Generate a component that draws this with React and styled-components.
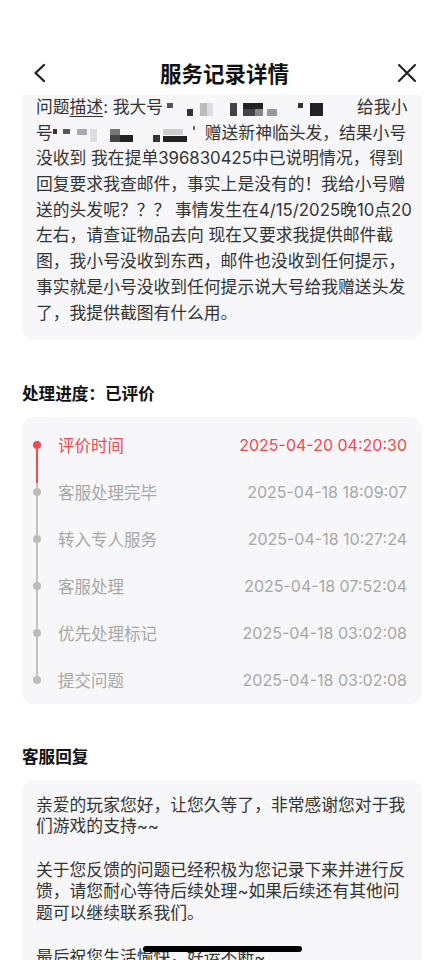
import React from 'react';
import styled, { createGlobalStyle } from 'styled-components';

const GlobalStyle = createGlobalStyle`
  body {
    margin: 0;
    background: #ffffff;
    font-family: "Inter", "Noto Sans CJK SC", sans-serif;
    color: #333333;
  }
`;

const RED = '#f0494f';
const GRAY_LINE = '#c3c2bb';

const Page = styled.div`
  padding: 83px 22px 40px;
`;

const Header = styled.header`
  position: fixed;
  top: 0;
  left: 0;
  right: 0;
  z-index: 10;
  height: 95px;
  box-sizing: border-box;
  padding-top: 51px;
  background: #ffffff;
`;

const NavRow = styled.div`
  height: 44px;
  display: grid;
  grid-template-columns: 1fr auto 1fr;
  align-items: center;
  padding: 0 27px 0 32px;
`;

const Title = styled.h1`
  margin: 0;
  font-family: "Noto Sans CJK SC", sans-serif;
  font-size: 21.5px;
  font-weight: 700;
  color: #111111;
  line-height: 30px;
`;

const NavButton = styled.button`
  border: none;
  background: transparent;
  padding: 0;
  display: flex;
  justify-self: ${({ end }) => (end ? 'end' : 'start')};
  color: #222222;
`;

const Card = styled.section`
  background: #f7f7f9;
  border-radius: 12px;
  padding: ${({ pad }) => pad};
`;

const Line = styled.div`
  white-space: nowrap;
  font-size: 16.8px;
  line-height: ${({ lh }) => lh}px;
  height: ${({ lh }) => lh}px;
  color: #333333;
`;

const Under = styled.span`
  text-decoration: underline;
  text-underline-offset: 3px;
`;

const Mosaic = styled.svg`
  display: inline-block;
  vertical-align: -3px;
`;

const SectionTitle = styled.h2`
  margin: ${({ top }) => top}px 0 12px;
  font-family: "Noto Sans CJK SC", sans-serif;
  font-size: 16.6px;
  font-weight: 700;
  line-height: 24px;
  color: #111111;
`;

const Row = styled.div`
  display: flex;
  align-items: stretch;
  height: 47px;
`;

const Rail = styled.div`
  width: 9px;
  display: flex;
  flex-direction: column;
  align-items: center;
  margin-right: 17px;
`;

const Segment = styled.div`
  width: 2px;
  flex: 1;
  background: ${({ bg }) => bg};
`;

const Dot = styled.div`
  width: 8px;
  height: 8px;
  border-radius: 50%;
  background: ${({ active }) => (active ? RED : '#bebdb5')};
`;

const Label = styled.div`
  align-self: center;
  font-family: "Noto Sans CJK SC", sans-serif;
  font-size: 16.5px;
  color: ${({ active }) => (active ? RED : '#a7a7a7')};
`;

const Time = styled.div`
  align-self: center;
  margin-left: auto;
  font-family: "Inter", sans-serif;
  font-size: 16px;
  color: ${({ active }) => (active ? RED : '#a7a7a7')};
`;

const HomeBar = styled.div`
  position: fixed;
  left: 143px;
  bottom: 8px;
  width: 159px;
  height: 6px;
  border-radius: 3px;
  background: #000000;
  z-index: 20;
`;

const blocks1 = [
  [4, 4, 6, 5, '#555'],
  [24, 10, 6, 7, '#333'],
  [37, 4, 7, 13, '#bbb'],
  [44, 4, 6, 13, '#ddd'],
  [67, 4, 7, 13, '#444'],
  [80, 4, 20, 6, '#222'],
  [80, 10, 12, 7, '#444'],
  [92, 10, 8, 7, '#888'],
  [104, 10, 10, 7, '#999'],
  [135, 4, 5, 5, '#333'],
  [147, 4, 13, 13, '#222'],
];

const blocks2 = [
  [0, 4, 4, 5, '#333'],
  [10, 4, 7, 5, '#555'],
  [24, 4, 10, 6, '#aaa'],
  [37, 4, 7, 13, '#ddd'],
  [57, 4, 10, 6, '#777'],
  [57, 10, 10, 7, '#444'],
  [67, 10, 13, 7, '#222'],
  [100, 10, 7, 7, '#333'],
  [110, 4, 20, 6, '#ccc'],
  [110, 11, 24, 6, '#222'],
  [140, 1, 2, 4, '#666'],
];

const Pixels = ({ width, blocks }) => (
  <Mosaic width={width} height="17" viewBox={`0 0 ${width} 17`}>
    {blocks.map(([x, y, w, h, c], i) => (
      <rect key={i} x={x} y={y} width={w} height={h} fill={c} />
    ))}
  </Mosaic>
);

const issueLines = [
  '没收到 我在提单396830425中已说明情况，得到',
  '回复要求我查邮件，事实上是没有的！我给小号赠',
  '送的头发呢？？？ 事情发生在4/15/2025晚10点20',
  '左右，请查证物品去向 现在又要求我提供邮件截',
  '图，我小号没收到东西，邮件也没收到任何提示，',
  '事实就是小号没收到任何提示说大号给我赠送头发',
  '了，我提供截图有什么用。',
];

const steps = [
  { label: '评价时间', time: '2025-04-20 04:20:30', active: true },
  { label: '客服处理完毕', time: '2025-04-18 18:09:07' },
  { label: '转入专人服务', time: '2025-04-18 10:27:24' },
  { label: '客服处理', time: '2025-04-18 07:52:04' },
  { label: '优先处理标记', time: '2025-04-18 03:02:08' },
  { label: '提交问题', time: '2025-04-18 03:02:08' },
];

const replyLines = [
  '亲爱的玩家您好，让您久等了，非常感谢您对于我',
  '们游戏的支持~~',
  '',
  '关于您反馈的问题已经积极为您记录下来并进行反',
  '馈，请您耐心等待后续处理~如果后续还有其他问',
  '题可以继续联系我们。',
  '',
  '最后祝您生活愉快，好运不断~',
];

const segTop = (i) => {
  if (i === 0) return 'transparent';
  if (i === 1) return `linear-gradient(${RED} 14px, ${GRAY_LINE} 14px)`;
  return GRAY_LINE;
};

const segBottom = (i) => {
  if (i === steps.length - 1) return 'transparent';
  return i === 0 ? RED : GRAY_LINE;
};

const App = () => (
  <>
    <GlobalStyle />
    <Header>
      <NavRow>
        <NavButton>
          <svg width="14" height="20" viewBox="0 0 14 20" fill="none">
            <path d="M12 2 L3.5 10 L12 18" stroke="#222" strokeWidth="2.4" strokeLinecap="round" strokeLinejoin="round" />
          </svg>
        </NavButton>
        <Title>服务记录详情</Title>
        <NavButton end>
          <svg width="20" height="20" viewBox="0 0 20 20" fill="none">
            <path d="M2 2 L18 18 M18 2 L2 18" stroke="#222" strokeWidth="2.1" strokeLinecap="round" />
          </svg>
        </NavButton>
      </NavRow>
    </Header>

    <Page>
      <Card pad="12px 14px 14px">
        <Line lh={25.7}>
          问题<Under>描述</Under>: 我大号<Pixels width={194} blocks={blocks1} />给我小
        </Line>
        <Line lh={25.7}>
          号<Pixels width={152} blocks={blocks2} />赠送新神临头发，结果小号
        </Line>
        {issueLines.map((t) => (
          <Line key={t} lh={25.7}>{t}</Line>
        ))}
      </Card>

      <SectionTitle top={41}>处理进度：已评价</SectionTitle>
      <Card pad="4.5px 15px 0 10px">
        {steps.map((s, i) => (
          <Row key={s.label}>
            <Rail>
              <Segment bg={segTop(i)} />
              <Dot active={s.active} />
              <Segment bg={segBottom(i)} />
            </Rail>
            <Label active={s.active}>{s.label}</Label>
            <Time active={s.active}>{s.time}</Time>
          </Row>
        ))}
      </Card>

      <SectionTitle top={40}>客服回复</SectionTitle>
      <Card pad="15px 14px 15px">
        {replyLines.map((t, i) => (
          <Line key={i} lh={21.7}>{t}</Line>
        ))}
      </Card>
    </Page>
    <HomeBar />
  </>
);

export default App;
